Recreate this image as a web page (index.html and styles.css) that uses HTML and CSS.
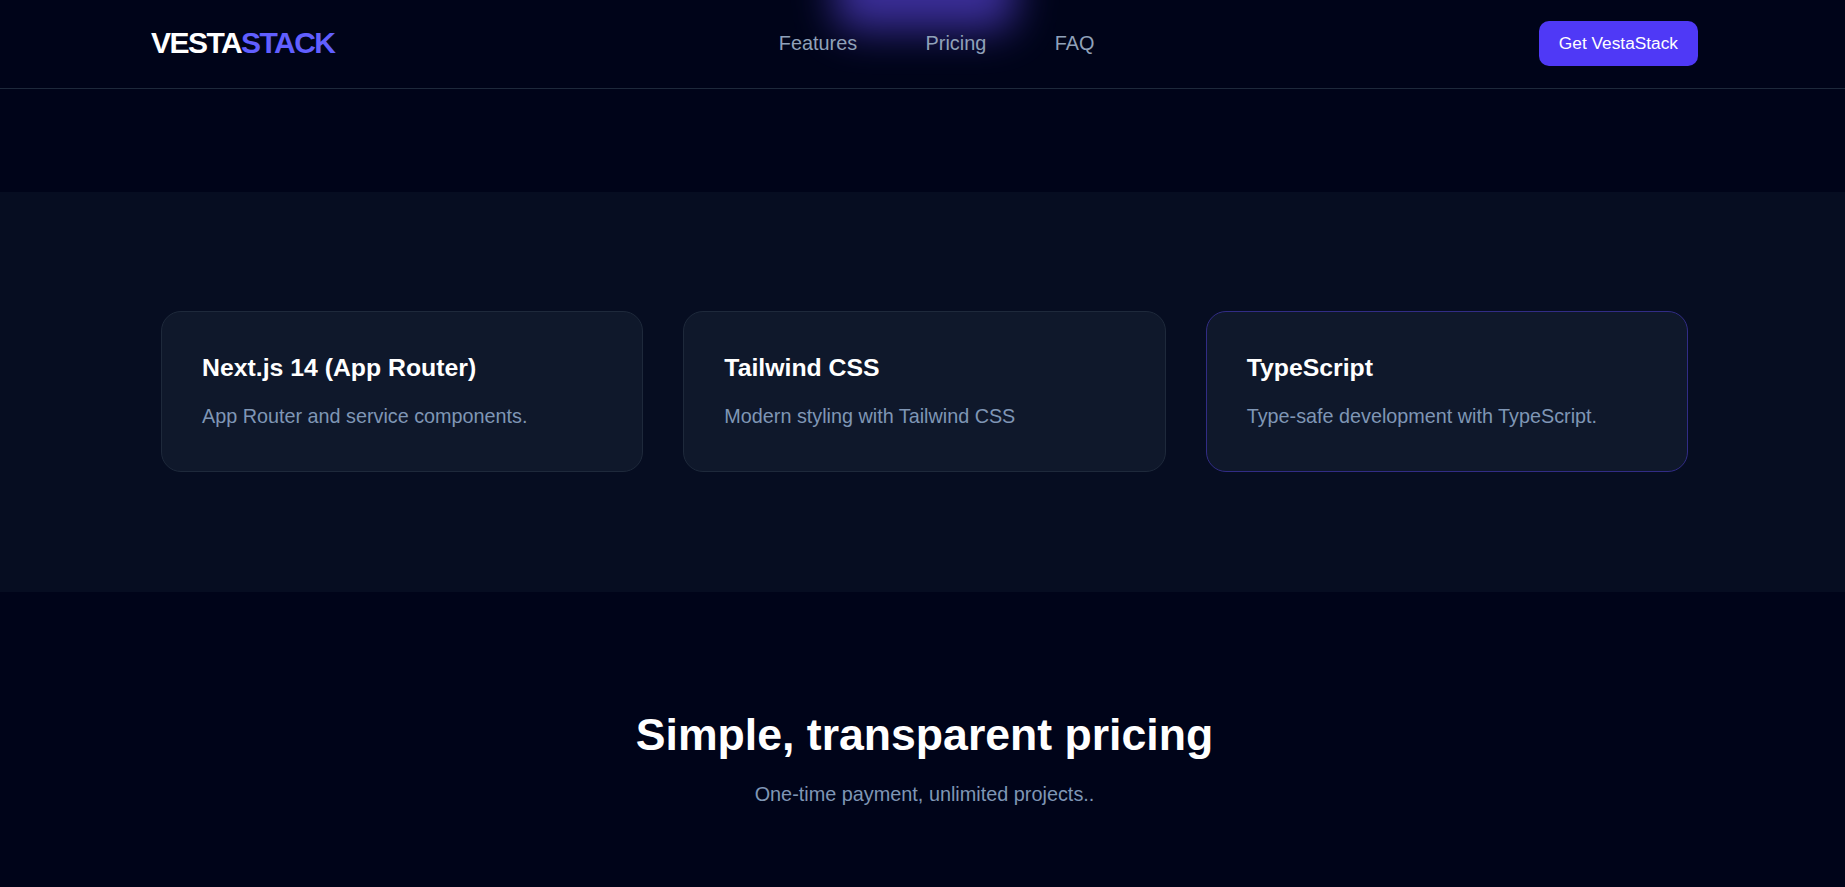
FILE: index.html
```html
<!DOCTYPE html>
<html lang="en">
<head>
<meta charset="utf-8">
<title>VestaStack</title>
<link rel="stylesheet" href="styles.css">
</head>
<body>
<div class="glow"></div>
<header class="nav">
  <a class="logo" href="#"><span class="logo-a">VESTA</span><span class="logo-b">STACK</span></a>
  <nav class="links">
    <a href="#">Features</a>
    <a href="#">Pricing</a>
    <a href="#">FAQ</a>
  </nav>
  <a class="cta" href="#">Get VestaStack</a>
</header>
<div class="spacer"></div>
<section class="features">
  <div class="grid">
    <article class="card">
      <h3>Next.js 14 (App Router)</h3>
      <p>App Router and service components.</p>
    </article>
    <article class="card">
      <h3>Tailwind CSS</h3>
      <p>Modern styling with Tailwind CSS</p>
    </article>
    <article class="card active">
      <h3>TypeScript</h3>
      <p>Type-safe development with TypeScript.</p>
    </article>
  </div>
</section>
<section class="pricing">
  <h2>Simple, transparent pricing</h2>
  <p>One-time payment, unlimited projects..</p>
</section>
</body>
</html>
```

FILE: styles.css
```css
* { box-sizing: border-box; }
html, body { margin: 0; height: 100%; }
body {
  background: #000419;
  font-family: "Liberation Sans", Arial, sans-serif;
  overflow: hidden;
  position: relative;
  width: 1849px;
}
a { text-decoration: none; color: inherit; }
.glow {
  position: absolute;
  left: 835px;
  top: -50px;
  width: 180px;
  height: 80px;
  background: #5f48e6;
  opacity: 0.62;
  filter: blur(20px);
  border-radius: 20px;
}
.nav {
  position: relative;
  height: 89px;
  padding: 0 151px 2px;
  display: flex;
  justify-content: space-between;
  align-items: center;
  border-bottom: 1px solid #1e293b;
}
.logo { font-size: 30px; font-weight: 700; letter-spacing: -1.55px; }
.logo-a { color: #fff; }
.logo-b { color: #615fff; }
.links { display: flex; gap: 68.5px; font-size: 19.85px; color: #90a1b9; }
.cta {
  height: 45px;
  padding: 0 20px;
  display: flex;
  align-items: center;
  background: #4f39f6;
  color: #fff;
  font-size: 17.3px;
  border-radius: 10px;
}
.spacer { height: 103px; }
.features { background: #060d21; padding: 119px 161px 120px; }
.grid { display: grid; grid-template-columns: repeat(3, 1fr); gap: 40px; }
.card {
  background: #0f182b;
  border: 1px solid #1e293b;
  border-radius: 20px;
  height: 161px;
  padding: 41px 40px 40px;
}
.card.active { border-color: #312c85; }
.card h3 { margin: 0; color: #fff; font-size: 24.8px; font-weight: 700; line-height: 30px; }
.card p { margin: 17.5px 0 0; color: #7f96b5; font-size: 19.8px; line-height: 30px; }
.pricing { padding: 118px 0 0; text-align: center; }
.pricing h2 { margin: 0; color: #fff; font-size: 44.6px; font-weight: 700; line-height: 50px; }
.pricing p { margin: 19px 0 0; color: #7f96b5; font-size: 19.85px; line-height: 30px; }
```
